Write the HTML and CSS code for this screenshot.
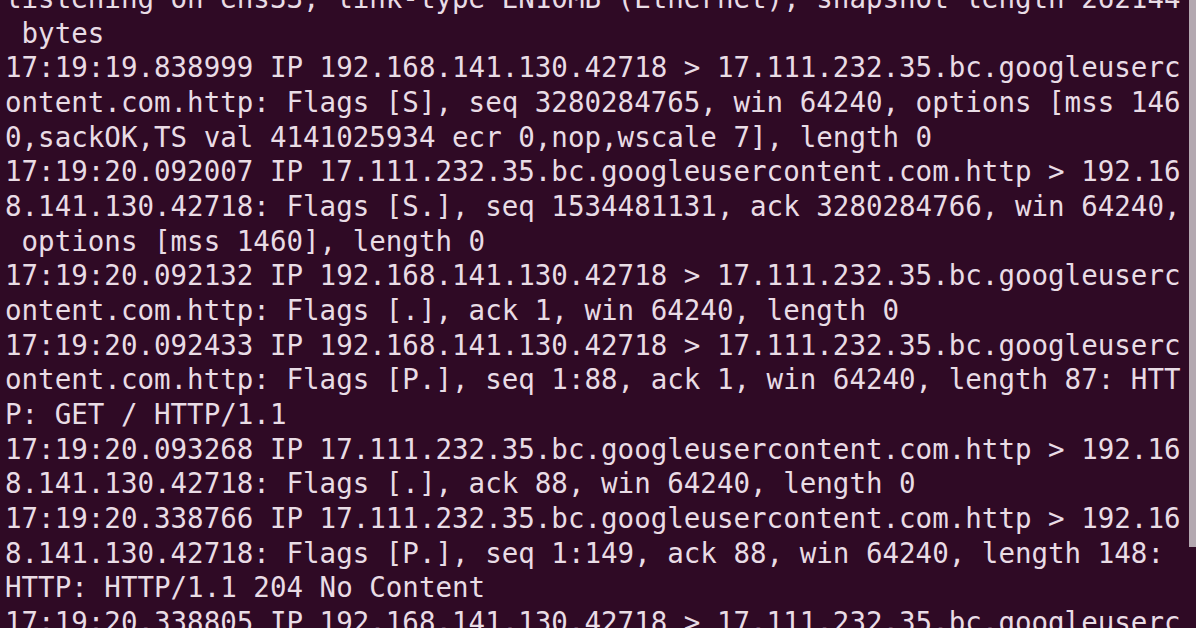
FILE: index.html
```html
<!DOCTYPE html>
<html>
<head>
<meta charset="utf-8">
<link rel="stylesheet" href="styles.css">
</head>
<body>
<div class="terminal">
<pre class="output">listening on ens33, link-type EN10MB (Ethernet), snapshot length 262144
 bytes
17:19:19.838999 IP 192.168.141.130.42718 &gt; 17.111.232.35.bc.googleuserc
ontent.com.http: Flags [S], seq 3280284765, win 64240, options [mss 146
0,sackOK,TS val 4141025934 ecr 0,nop,wscale 7], length 0
17:19:20.092007 IP 17.111.232.35.bc.googleusercontent.com.http &gt; 192.16
8.141.130.42718: Flags [S.], seq 1534481131, ack 3280284766, win 64240,
 options [mss 1460], length 0
17:19:20.092132 IP 192.168.141.130.42718 &gt; 17.111.232.35.bc.googleuserc
ontent.com.http: Flags [.], ack 1, win 64240, length 0
17:19:20.092433 IP 192.168.141.130.42718 &gt; 17.111.232.35.bc.googleuserc
ontent.com.http: Flags [P.], seq 1:88, ack 1, win 64240, length 87: HTT
P: GET / HTTP/1.1
17:19:20.093268 IP 17.111.232.35.bc.googleusercontent.com.http &gt; 192.16
8.141.130.42718: Flags [.], ack 88, win 64240, length 0
17:19:20.338766 IP 17.111.232.35.bc.googleusercontent.com.http &gt; 192.16
8.141.130.42718: Flags [P.], seq 1:149, ack 88, win 64240, length 148:
HTTP: HTTP/1.1 204 No Content
17:19:20.338805 IP 192.168.141.130.42718 &gt; 17.111.232.35.bc.googleuserc</pre>
<div class="scrollbar"></div>
</div>
</body>
</html>
```
FILE: styles.css
```css
html, body {
  margin: 0;
  padding: 0;
  background: #2f0a25;
  overflow: hidden;
}
.terminal {
  position: relative;
  width: 1196px;
  height: 628px;
  overflow: hidden;
  background: #2f0a25;
}
.output {
  margin: -19px 0 0 0;
  padding: 0 0 0 5px;
  font-family: "DejaVu Sans Mono", monospace;
  font-size: 27.5px;
  line-height: 34.65px;
  color: #e9dce5;
  white-space: pre;
}
.scrollbar {
  position: absolute;
  top: 0;
  right: 0;
  width: 7px;
  height: 547px;
  background: #b3a8b0;
}
```
